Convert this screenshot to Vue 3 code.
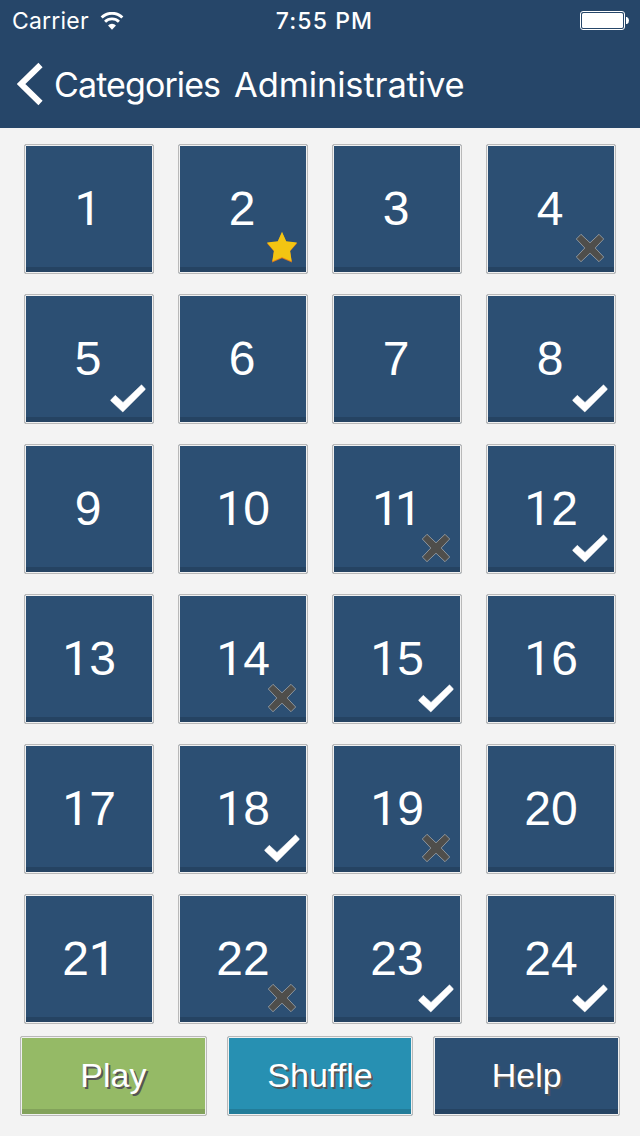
<script setup>
import { ref } from 'vue';

const category = ref('Administrative');

// Results by level number, anything missing hasn't been played yet
const results = {
  2: 'star',
  4: 'wrong',
  5: 'right',
  8: 'right',
  11: 'wrong',
  12: 'right',
  14: 'wrong',
  15: 'right',
  18: 'right',
  19: 'wrong',
  22: 'wrong',
  23: 'right',
  24: 'right'
};

const actions = [
  { id: 'play', label: 'Play' },
  { id: 'shuffle', label: 'Shuffle' },
  { id: 'help', label: 'Help' }
];

// Splits a number into runs of ones and runs of other digits, e.g. 21 -> ['2', '1']
function digitRuns(level) {
  return String(level).match(/1+|[^1]+/g);
}
</script>

<template>
  <div class="screen">
    <header class="header">
      <div class="status-bar">
        <div class="status-left">
          <span class="carrier">Carrier</span>
          <svg class="wifi" width="24" height="18" viewBox="0 0 26 20">
            <path d="M1.5 6.2 A16.2 16.2 0 0 1 24.5 6.2" />
            <path d="M5.3 10.8 A10.9 10.9 0 0 1 20.7 10.8" />
            <path class="wifi-dot" d="M8.6 14.9 A6 6 0 0 1 17.4 14.9 L13 19.6 Z" />
          </svg>
        </div>
        <span class="clock">7:55 PM</span>
        <div class="status-right">
          <svg width="50" height="20" viewBox="0 0 50 20">
            <rect class="battery-case" x="0.5" y="0.5" width="44" height="18" rx="2.5" />
            <rect class="battery-fill" x="2" y="2" width="41" height="15" rx="1.5" />
            <path class="battery-fill" d="M46 6 H47 Q49 7 49 9.5 Q49 12 47 13 H46 Z" />
          </svg>
        </div>
      </div>
      <nav class="nav-bar">
        <svg class="back-icon" width="28" height="44" viewBox="0 0 28 44">
          <path d="M23.5 3 L4 22 L23.5 41" />
        </svg>
        <span class="back-label">Categories</span>
        <h1 class="title">{{ category }}</h1>
      </nav>
    </header>

    <main class="level-grid">
      <button v-for="level in 24" :key="level" class="tile level">
        <span class="level-number" :class="{ single: level < 10 }">
          <span
            v-for="(run, i) in digitRuns(level)"
            :key="i"
            :class="{ one: run[0] === '1', pair: run === '11' }"
          >{{ run }}</span>
        </span>
        <svg v-if="results[level]" class="badge" :class="results[level]" width="36" height="36" viewBox="0 0 36 36">
          <path v-if="results[level] === 'right'" d="M5.3 15.3 L0.9 19.8 Q0.4 20.5 1 21 L12.8 32 L35 9.8 Q35.5 9 35 8.4 L31.5 4.8 L13 22.4 Z" />
          <path v-else-if="results[level] === 'wrong'" d="M9 4.3 L18 12.8 L27 4.3 L31.7 9 L23.2 18 L31.7 27 L27 31.7 L18 23.2 L9 31.7 L4.3 27 L12.8 18 L4.3 9 Z" />
          <template v-else>
            <path class="star-edge" d="M18 2.5 L22.2 11.8 L33.2 13.2 L26 21.3 L28 32.5 L18 28.2 L8 32.5 L10 21.3 L2.8 13.2 L13.8 11.8 Z" />
            <path d="M18 1.8 L22.2 11.2 L33 12.5 L26.1 20.7 L27.6 31.2 L18 27.2 L8.4 31.2 L9.9 20.7 L3 12.5 L13.8 11.2 Z" />
          </template>
        </svg>
      </button>
    </main>

    <footer class="actions">
      <button v-for="action in actions" :key="action.id" class="tile action" :class="action.id">
        {{ action.label }}
      </button>
    </footer>
  </div>
</template>

<style>
body {
  margin: 0;
  background: #f3f3f3;
}
</style>

<style scoped>
.screen {
  width: 640px;
  height: 1136px;
  overflow: hidden;
  background: #f3f3f3;
  color: #fff;
  font-family: "Liberation Sans", Arial, sans-serif;
}

.header {
  height: 128px;
  background: #264669;
  font-family: Inter, sans-serif;
}

.status-bar {
  box-sizing: border-box;
  display: grid;
  grid-template-columns: 1fr auto 1fr;
  align-items: center;
  height: 41px;
  padding: 1px 10px 0 12px;
  line-height: 40px;
}

.status-left {
  display: flex;
  align-items: center;
  gap: 11px;
}

.carrier {
  font-size: 23px;
  font-weight: 400;
  letter-spacing: 0.2px;
}

.wifi path {
  fill: none;
  stroke: #fff;
  stroke-width: 3.2;
}

.wifi .wifi-dot {
  fill: #fff;
  stroke: none;
}

.clock {
  padding-left: 7px;
  font-size: 23px;
  font-weight: 500;
  letter-spacing: 1.1px;
}

.status-right {
  display: flex;
  justify-content: flex-end;
}

.battery-case {
  fill: none;
  stroke: #fff;
}

.battery-fill {
  fill: #fff;
}

.nav-bar {
  display: flex;
  align-items: center;
  height: 86px;
  padding-left: 17px;
}

.back-icon path {
  fill: none;
  stroke: #fff;
  stroke-width: 6;
}

.back-label {
  width: 165px;
  margin-left: 9px;
  font-size: 34px;
  font-weight: 400;
  letter-spacing: -0.9px;
}

.title {
  margin: 0 0 0 15px;
  font-size: 34.5px;
  font-weight: 400;
  letter-spacing: -0.15px;
}

.level-grid {
  display: grid;
  grid-template-columns: repeat(4, 130px);
  grid-auto-rows: 130px;
  gap: 20px 24px;
  padding: 16px 24px 0;
}

/* Raised tile: thin outline, light inner line and a darker lip at the bottom */
.tile {
  --face: #2c4f73;
  --lip: #254362;
  box-sizing: border-box;
  display: flex;
  align-items: center;
  justify-content: center;
  margin: 0;
  padding: 0;
  border: 1px solid #b9b9b9;
  border-radius: 2px;
  background: var(--face);
  box-shadow: inset 0 0 0 1px #f0f0f0, inset 0 -6px 0 var(--lip);
  color: #fff;
  font-family: inherit;
}

.level {
  position: relative;
}

.level-number {
  display: flex;
  font-size: 48px;
  line-height: 54px;
}

.level-number.single {
  padding-right: 2px;
}

/* Footless numeral, pulled together when two stand side by side */
.one {
  font-family: Roboto, sans-serif;
}

.pair {
  margin-right: 4px;
  letter-spacing: -4px;
}

.badge {
  position: absolute;
  left: 85px;
  top: 85px;
}

.right path {
  fill: #fff;
  stroke: #fff;
  stroke-width: 0.5;
  stroke-linejoin: round;
}

.wrong path {
  fill: #4f4e4b;
  stroke: #9fa6ab;
  stroke-width: 0.8;
  stroke-linejoin: round;
}

.star path {
  fill: #f3c512;
}

.star .star-edge {
  fill: #e07b1c;
}

.actions {
  display: grid;
  grid-template-columns: repeat(3, 1fr);
  gap: 20px;
  padding: 12px 20px 20px;
}

.action {
  height: 80px;
  padding-bottom: 2px;
  font-size: 34px;
  text-shadow: 2px 2px 0 #555;
}

.play {
  --face: #95ba66;
  --lip: #82a25a;
}

.shuffle {
  --face: #2790b2;
  --lip: #227c99;
}
</style>
